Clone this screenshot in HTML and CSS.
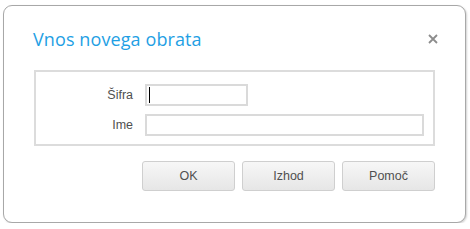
FILE: index.html
```html
<!DOCTYPE html>
<html lang="sl">
<head>
<meta charset="utf-8">
<title>Vnos novega obrata</title>
<link rel="stylesheet" href="styles.css">
</head>
<body>
<div class="dialog">
  <div class="header">
    <h1 class="title">Vnos novega obrata</h1>
    <button class="close" type="button" aria-label="Zapri">
      <svg width="10" height="10" viewBox="0 0 10 10"><path d="M1 1 L9 9 M9 1 L1 9" stroke="#8c8c8c" stroke-width="1.8" fill="none"/></svg>
    </button>
  </div>
  <div class="fields">
    <label class="label" for="sifra">Šifra</label>
    <div class="caret-wrap"><input id="sifra" class="input input-short" type="text"><span class="caret"></span></div>
    <label class="label" for="ime">Ime</label>
    <input id="ime" class="input input-long" type="text">
  </div>
  <div class="actions">
    <button class="btn" type="button">OK</button>
    <button class="btn" type="button">Izhod</button>
    <button class="btn" type="button">Pomoč</button>
  </div>
</div>
</body>
</html>
```
FILE: styles.css
```css
html, body {
  margin: 0;
  padding: 0;
  background: #ffffff;
}
body {
  padding: 5px 0 0 3px;
  font-family: "Liberation Sans", Arial, sans-serif;
}
.dialog {
  box-sizing: border-box;
  width: 463px;
  height: 218px;
  border: 1px solid #a8a8a8;
  border-radius: 9px;
  box-shadow: 1px 1px 2px rgba(0,0,0,0.18);
  background: #fff;
  padding: 0 30px 0 29px;
}
.header {
  display: flex;
  align-items: center;
  justify-content: space-between;
  height: 64px;
  padding-top: 1px;
  box-sizing: border-box;
}
.title {
  margin: 0;
  font-family: "Open Sans", "Noto Sans", sans-serif;
  font-weight: 400;
  font-size: 18px;
  line-height: 22px;
  color: #1f9fe4;
  letter-spacing: 0.1px;
}
.close {
  border: 0;
  background: none;
  padding: 0;
  margin-right: -3px;
  width: 10px;
  height: 10px;
  display: block;
  cursor: pointer;
}
.close svg { display: block; }
.fields {
  margin-left: 1px;
  border: 2px solid #dcdcdc;
  display: grid;
  grid-template-columns: 97px auto;
  column-gap: 12px;
  row-gap: 8px;
  padding: 12px 10px 8px 0;
  align-items: center;
}
.label {
  text-align: right;
  font-size: 12.5px;
  color: #505050;
}
.input {
  box-sizing: border-box;
  height: 22px;
  border: 2px solid #dadada;
  border-radius: 0;
  margin: 0;
  padding: 0 3px;
  font: inherit;
  background: #fff;
  outline: none;
}
.input-short { width: 103px; }
.input-long { width: 279px; }
.caret-wrap {
  position: relative;
  width: 103px;
  height: 22px;
}
.caret {
  position: absolute;
  left: 4px;
  top: 3px;
  width: 1px;
  height: 16px;
  background: #000;
}
.actions {
  display: flex;
  justify-content: flex-end;
  gap: 7px;
  margin-top: 15px;
}
.btn {
  box-sizing: border-box;
  width: 93px;
  height: 30px;
  border: 1px solid #cfcfcf;
  border-radius: 3px;
  background: linear-gradient(#f7f7f7, #e6e6e6);
  font-family: "Liberation Sans", Arial, sans-serif;
  font-size: 12.5px;
  color: #505050;
  padding: 0;
}
```
